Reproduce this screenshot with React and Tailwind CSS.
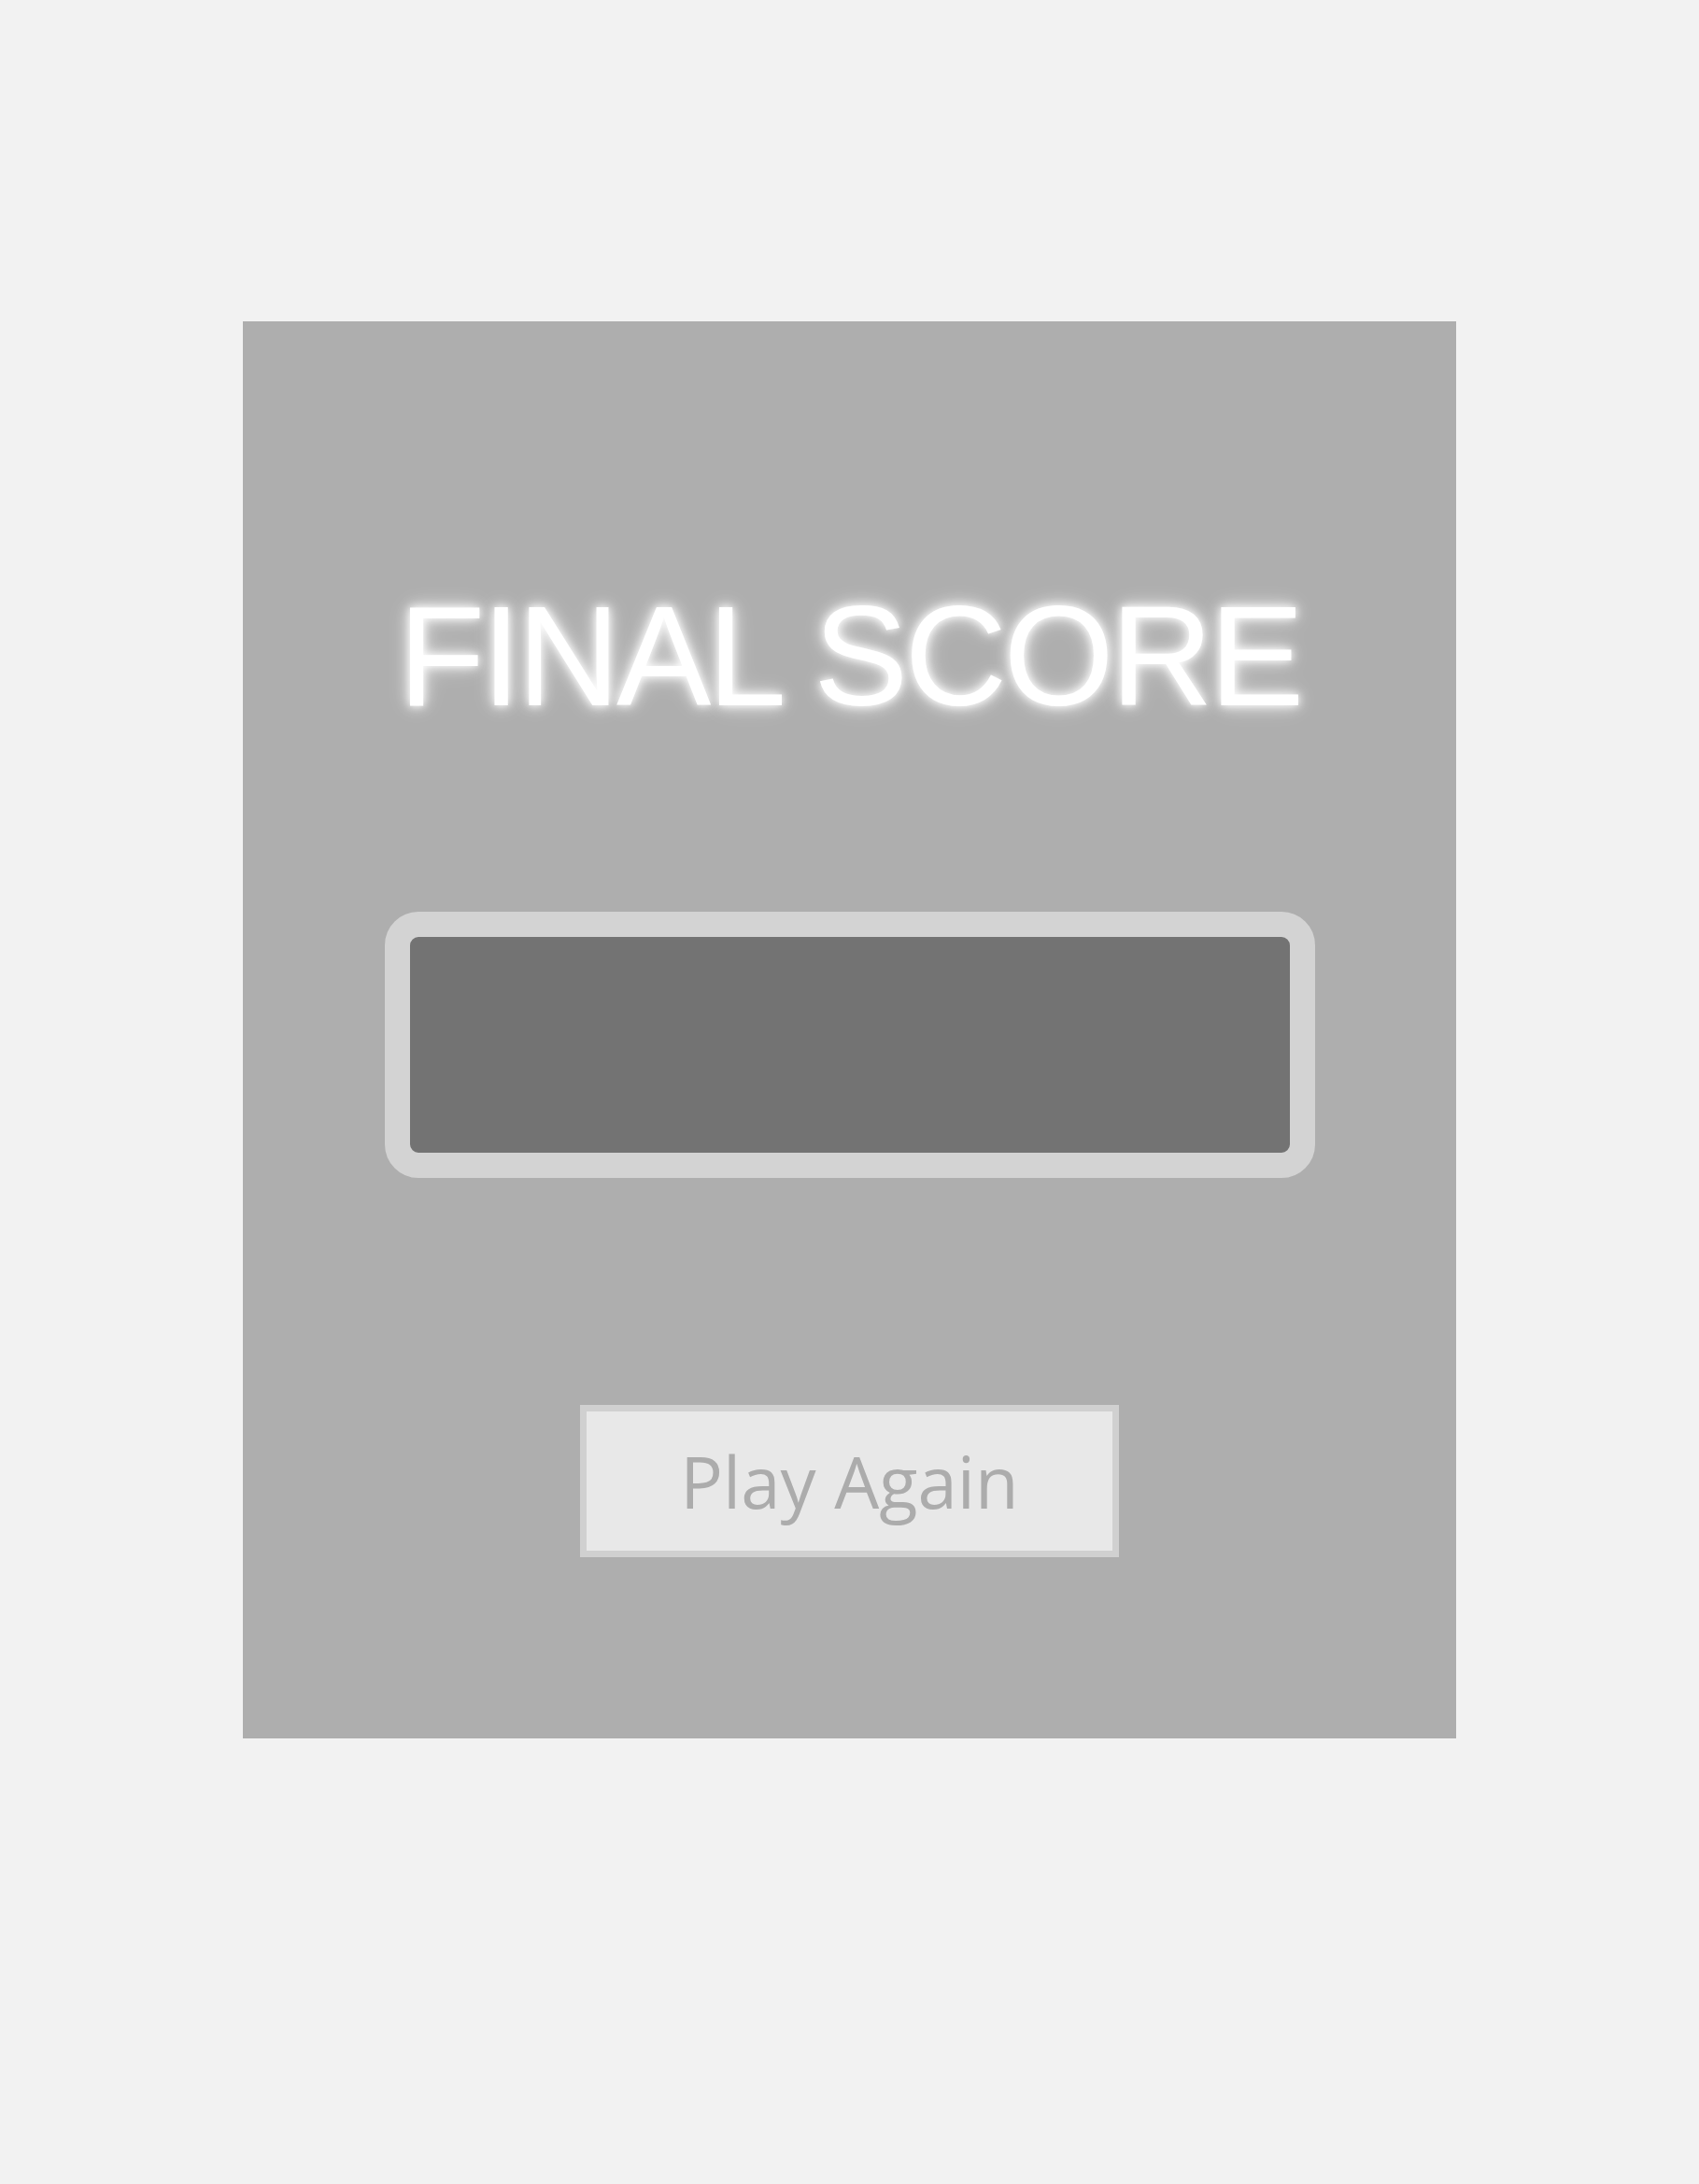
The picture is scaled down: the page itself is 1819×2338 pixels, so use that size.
export default function App() {
    return (
        <div className="min-h-[2338px] bg-[#f2f2f2] flex justify-center pt-[344px]">
            <div className="w-[1299px] h-[1517px] bg-[#aeaeae] flex flex-col items-center pt-[282px]">
                <h1
                    className="text-[152px] leading-none tracking-[-0.025em] text-white [text-shadow:0_0_8px_rgba(255,255,255,0.95),0_0_16px_rgba(255,255,255,0.8),0_0_26px_rgba(255,255,255,0.45)]"
                    style={{ fontFamily: '"Liberation Sans", Arial, sans-serif' }}
                >
                    FINAL SCORE
                </h1>

                {/* score slot — empty in the reference */}
                <div className="mt-[198px] w-[996px] h-[285px] rounded-[36px] border-[27px] border-[#d3d3d3] bg-[#737373]" />

                <button
                    className="mt-[243px] w-[577px] h-[163px] border-[7px] border-[#d0d0d0] bg-[#e8e8e8] text-[#acacac] text-[76px] leading-none flex items-center justify-center"
                    style={{ fontFamily: '"Open Sans", "Noto Sans", sans-serif' }}
                >
                    Play Again
                </button>
            </div>
        </div>
    );
}
